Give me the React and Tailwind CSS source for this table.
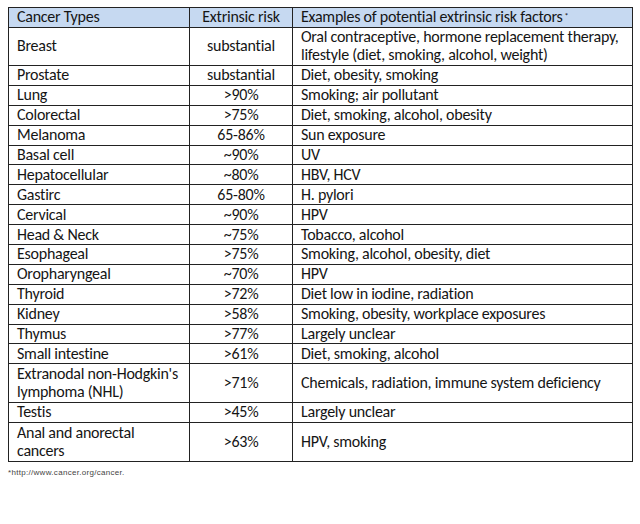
const rows = [
  { type: "Breast", risk: "substantial", factors: ["Oral contraceptive, hormone replacement therapy,", "lifestyle (diet, smoking, alcohol, weight)"], h: "h-[38.5px]" },
  { type: "Prostate", risk: "substantial", factors: "Diet, obesity, smoking" },
  { type: "Lung", risk: ">90%", factors: "Smoking; air pollutant" },
  { type: "Colorectal", risk: ">75%", factors: "Diet, smoking, alcohol, obesity" },
  { type: "Melanoma", risk: "65-86%", factors: "Sun exposure" },
  { type: "Basal cell", risk: "~90%", factors: "UV" },
  { type: "Hepatocellular", risk: "~80%", factors: "HBV, HCV" },
  { type: "Gastirc", risk: "65-80%", factors: "H. pylori" },
  { type: "Cervical", risk: "~90%", factors: "HPV" },
  { type: "Head & Neck", risk: "~75%", factors: "Tobacco, alcohol" },
  { type: "Esophageal", risk: ">75%", factors: "Smoking, alcohol, obesity, diet" },
  { type: "Oropharyngeal", risk: "~70%", factors: "HPV" },
  { type: "Thyroid", risk: ">72%", factors: "Diet low in iodine, radiation" },
  { type: "Kidney", risk: ">58%", factors: "Smoking, obesity, workplace exposures" },
  { type: "Thymus", risk: ">77%", factors: "Largely unclear" },
  { type: "Small intestine", risk: ">61%", factors: "Diet, smoking, alcohol" },
  { type: ["Extranodal non-Hodgkin's", "lymphoma (NHL)"], risk: ">71%", factors: "Chemicals, radiation, immune system deficiency", h: "h-[38.7px]" },
  { type: "Testis", risk: ">45%", factors: "Largely unclear" },
  { type: ["Anal and anorectal", "cancers"], risk: ">63%", factors: "HPV, smoking", h: "h-[39px]" },
];

// arrays are the lines as they break in the source table
const lines = (v) => (Array.isArray(v) ? v.map((l, i) => <div key={i}>{l}</div>) : v);

export default function App() {
  return (
    <div className="w-[640px] h-[524px] bg-white pt-[7px] pl-[8px] font-['Carlito','Lato',sans-serif] text-[#151515]">
      <table className="table-fixed border-collapse w-[624px] text-[16px] leading-[18px] tracking-[-0.25px] whitespace-nowrap">
        <colgroup>
          <col className="w-[181px]" />
          <col className="w-[103px]" />
          <col className="w-[340px]" />
        </colgroup>
        <thead>
          <tr className="h-[19.5px] bg-[#c6d9f1]">
            <th className="border border-[#222] pl-2 pr-0 py-0 text-left font-normal">Cancer Types</th>
            <th className="border border-[#222] px-1 py-0 text-center font-normal">Extrinsic risk</th>
            <th className="border border-[#222] pl-2 pr-0 py-0 text-left font-normal">
              Examples of potential extrinsic risk factors<sup className="text-[8px] relative -top-[3px] ml-[2px]">*</sup>
            </th>
          </tr>
        </thead>
        <tbody>
          {rows.map((r) => (
            <tr key={String(r.type)} className={r.h || "h-[19.9px]"}>
              <td className="border border-[#222] pl-2 pr-0 py-0 align-middle">{lines(r.type)}</td>
              <td className="border border-[#222] px-1 py-0 text-center align-middle">{r.risk}</td>
              <td className="border border-[#222] pl-2 pr-0 py-0 align-middle">{lines(r.factors)}</td>
            </tr>
          ))}
        </tbody>
      </table>
      <p className="mt-[6px] text-[8px] leading-[10px] tracking-[0.3px] text-[#444] font-['Liberation_Sans',sans-serif]">*http://www.cancer.org/cancer.</p>
    </div>
  );
}
